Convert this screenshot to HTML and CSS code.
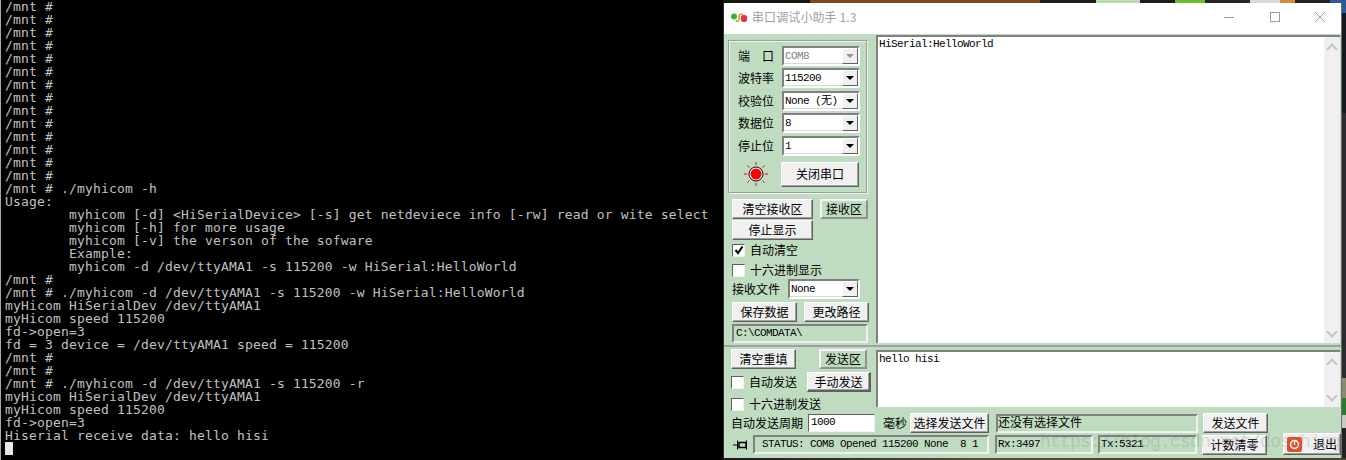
FILE: index.html
```html
<!DOCTYPE html>
<html lang="zh">
<head>
<meta charset="utf-8">
<title>串口调试小助手</title>
<link rel="stylesheet" href="styles.css">
</head>
<body>
<div class="desktop">
<pre class="terminal">/mnt #
/mnt #
/mnt #
/mnt #
/mnt #
/mnt #
/mnt #
/mnt #
/mnt #
/mnt #
/mnt #
/mnt #
/mnt #
/mnt #
/mnt # ./myhicom -h
Usage:
        myhicom [-d] &lt;HiSerialDevice&gt; [-s] get netdeviece info [-rw] read or wite select
        myhicom [-h] for more usage
        myhicom [-v] the verson of the sofware
        Example:
        myhicom -d /dev/ttyAMA1 -s 115200 -w HiSerial:HelloWorld
/mnt #
/mnt # ./myhicom -d /dev/ttyAMA1 -s 115200 -w HiSerial:HelloWorld
myHicom HiSerialDev /dev/ttyAMA1
myHicom speed 115200
fd-&gt;open=3
fd = 3 device = /dev/ttyAMA1 speed = 115200
/mnt #
/mnt #
/mnt # ./myhicom -d /dev/ttyAMA1 -s 115200 -r
myHicom HiSerialDev /dev/ttyAMA1
myHicom speed 115200
fd-&gt;open=3
Hiserial receive data: hello hisi
<span class="cursor"></span></pre>

<div class="strip-top"></div>
<div class="strip-right"></div>
<div class="strip-bottom"></div>

<section class="window">
  <header class="titlebar">
    <svg class="app-icon" width="17" height="11" viewBox="0 0 17 11">
      <path d="M5 8C5 10 8 10 8 7S8 2 10 2 12 4 12 6" fill="none" stroke="#c4ac20" stroke-width="1.600"/>
      <circle cx="3" cy="4.500" r="3" fill="#38b048"/>
      <rect x="10" y="3" width="6" height="7" rx="2.500" fill="#e8303a"/>
    </svg>
    <span class="title-text">串口调试小助手 1.3</span>
    <div class="caption">
      <svg width="12" height="12" viewBox="0 0 12 12"><path d="M1 6.500H11" stroke="#999" fill="none"/></svg>
      <svg width="12" height="12" viewBox="0 0 12 12"><rect x="1.500" y="1.500" width="9" height="9" stroke="#999" fill="none"/></svg>
      <svg width="12" height="12" viewBox="0 0 12 12"><path d="M1 1L11 11M11 1L1 11" stroke="#999" fill="none"/></svg>
    </div>
  </header>

  <div class="upper">
    <aside class="side">
      <div class="group">
        <div class="port-row"><span class="lbl spread"><span>端</span><span>口</span></span><span class="select disabled"><span class="val">COM8</span><i class="arrow"></i></span></div>
        <div class="port-row"><span class="lbl">波特率</span><span class="select"><span class="val">115200</span><i class="arrow"></i></span></div>
        <div class="port-row"><span class="lbl">校验位</span><span class="select"><span class="val">None (无)</span><i class="arrow"></i></span></div>
        <div class="port-row"><span class="lbl">数据位</span><span class="select"><span class="val">8</span><i class="arrow"></i></span></div>
        <div class="port-row"><span class="lbl">停止位</span><span class="select"><span class="val">1</span><i class="arrow"></i></span></div>
        <div class="open-row">
          <svg class="led" width="24" height="24" viewBox="0 0 24 24">
            <circle cx="12" cy="12" r="7" fill="#fff" stroke="#000"/>
            <circle cx="12" cy="12" r="5.500" fill="#f00"/>
            <path d="M12 0V3M12 21V24M0 12H3M21 12H24M3.500 3.500L5.500 5.500M20.500 3.500L18.500 5.500M3.500 20.500L5.500 18.500M20.500 20.500L18.500 18.500" stroke="#f00" fill="none"/>
          </svg>
          <span class="btn open-btn">关闭串口</span>
        </div>
      </div>
      <div class="recv-controls">
        <div class="row recv-row1"><span class="btn w81">清空接收区</span><span class="tag">接收区</span></div>
        <span class="btn w81">停止显示</span>
        <label class="check chk-first"><i class="box on"><svg width="10" height="10" viewBox="0 0 10 10"><path d="M1.500 5L4 8L8.500 1.500" fill="none" stroke="#000" stroke-width="2"/></svg></i>自动清空</label>
        <label class="check chk-second"><i class="box"></i>十六进制显示</label>
        <div class="row file-row"><span class="lbl">接收文件</span><span class="select small"><span class="val">None</span><i class="arrow"></i></span></div>
        <div class="row save-row"><span class="btn w65">保存数据</span><span class="btn w65">更改路径</span></div>
        <div class="path mono">C:\COMDATA\</div>
      </div>
    </aside>
    <div class="textbox recv">
      <div class="text mono">HiSerial:HelloWorld</div>
      <div class="scroll"><i class="up"></i><i class="down"></i></div>
    </div>
  </div>

  <div class="lower">
    <div class="send-area">
      <div class="send-side">
        <div class="row send-row1"><span class="btn w65">清空重填</span><span class="tag">发送区</span></div>
        <div class="row send-row2"><label class="check"><i class="box"></i>自动发送</label><span class="btn manual">手动发送</span></div>
        <label class="check chk-third"><i class="box"></i>十六进制发送</label>
      </div>
      <div class="textbox send">
        <div class="text mono">hello hisi</div>
        <div class="scroll"><i class="up"></i><i class="down"></i></div>
      </div>
    </div>
    <div class="row bottom-a">
      <span class="lbl period">自动发送周期</span>
      <span class="input">1000</span>
      <span class="lbl ms">毫秒</span>
      <span class="btn pick">选择发送文件</span>
      <span class="sunken nofile">还没有选择文件</span>
      <span class="btn w65 send-file">发送文件</span>
    </div>
    <div class="row bottom-b">
      <svg class="pin" width="15" height="12" viewBox="0 0 15 12"><path d="M0 6H4" stroke="#000" fill="none"/><path d="M4.500 1.500V10.500" stroke="#000" fill="none"/><path d="M6 3.500H13V8.500H6Z" stroke="#000" stroke-width="1.500" fill="#c0dcc0"/><path d="M13.500 1.500V10.500" stroke="#000" fill="none"/></svg>
      <span class="sunken status mono">STATUS: COM8 Opened 115200 None  8 1</span>
      <span class="sunken rx mono">Rx:3497</span>
      <span class="sunken tx mono">Tx:5321</span>
      <span class="btn w65 reset">计数清零</span>
      <span class="btn exit"><svg width="15" height="15" viewBox="0 0 15 15"><rect width="15" height="15" rx="2" fill="#e2502a"/><circle cx="7.500" cy="7.500" r="4" fill="none" stroke="#fff" stroke-width="1.500"/><path d="M7.500 4V8" stroke="#fff" stroke-width="1.500"/></svg>退出</span>
    </div>
  </div>
</section>
<div class="watermark">https://blog.csdn.net/dosthing</div>
</div>
</body>
</html>
```
FILE: styles.css
```css
* { box-sizing: border-box; }
html, body { margin: 0; padding: 0; background: #000; }
.desktop { position: relative; width: 1346px; height: 460px; overflow: hidden; background: #000; }

.terminal {
  margin: 0; width: 723px; height: 460px; overflow: hidden;
  padding: 0 0 0 4px; border-left: 1px solid #a8a8a8;
  background: #000; color: #c0c0c0;
  font: 13px/13px "DejaVu Sans Mono", monospace;
  letter-spacing: .17px;
}
.cursor { display: inline-block; width: 8px; height: 13px; background: #e8e8e8; vertical-align: top; }

.strip-top {
  position: absolute; left: 723px; top: 0; width: 623px; height: 3px;
  background: linear-gradient(90deg, #1b1510 0 87px, #7a4a22 87px 317px, #1e1c18 317px 373px, #b8dcb0 373px 417px, #1c1c1c 417px 452px, #6cbc2c 452px 482px, #2a2420 482px 527px, #d8d8d4 527px 557px, #d88a30 557px 572px, #222 572px 607px, #2c5a9a 607px);
}
.strip-right {
  position: absolute; left: 1342px; top: 3px; width: 4px; height: 457px;
  background: linear-gradient(180deg, #2c5a9a 0 10px, #151a22 10px 110px, #2a2c30 110px 375px, #8a8a70 375px 395px, #2a7a30 395px 412px, #c8c8c0 412px 425px, #222 425px);
}
.strip-bottom {
  position: absolute; left: 723px; top: 458px; width: 623px; height: 2px;
  background: linear-gradient(90deg, #1a1a1a, #5a4a38 40%, #4a4030);
}

.window {
  position: absolute; left: 723px; top: 3px; width: 619px; height: 455px;
  background: #c0dcc0; border-left: 1px solid #303030; border-right: 1px solid #707070;
  font: 12px/16px "Noto Sans CJK SC", sans-serif; color: #000;
  display: flex; flex-direction: column;
}
.titlebar { height: 31px; flex: none; background: #fff; display: flex; align-items: center; padding: 0 0 3px 7px; }
.app-icon { margin-right: 4px; }
.title-text { color: #a0a0a0; font-size: 12px; letter-spacing: .1px; }
.caption { margin-left: auto; display: flex; gap: 33.500px; padding-right: 15px; }

.upper { display: flex; height: 311px; flex: none; }
.side { width: 152px; flex: none; padding: 6px 0 0 4px; }
.group { width: 140px; height: 154px; border: 2px groove #f0f0f0; padding: 4px 0 0 8px; display: flex; flex-direction: column; gap: 3.500px; }
.port-row { display: flex; align-items: center; height: 19px; }
.port-row .lbl { width: 44px; }
.lbl { white-space: nowrap; }
.spread { display: flex; justify-content: space-between; padding-right: 8px; }

.select {
  display: flex; align-items: center; justify-content: space-between;
  width: 78px; height: 20px; background: #fff;
  border: 2px solid; border-color: #808080 #fff #fff #808080;
  padding-left: 1px;
  font: 11px/14px "Liberation Mono", "Noto Sans CJK SC", monospace;
  box-shadow: inset -1px -1px 0 #d8d8d8;
  white-space: pre;
}
.select.disabled { color: #808080; }
.val { letter-spacing: -.6px; }
.arrow {
  position: relative; display: block; flex: none; width: 16px; height: 16px; background: #f0f0f0;
  border: 1px solid; border-color: #fff #606060 #606060 #fff;
}
.arrow::after {
  content: ""; position: absolute; left: 3px; top: 5px;
  border: 4px solid transparent; border-top: 4px solid #000; border-bottom: 0;
}
.disabled .arrow::after { border-top-color: #909090; }

.btn {
  display: flex; align-items: center; justify-content: center; flex: none;
  height: 20px; background: #f0f0f0; white-space: nowrap;
  border: 1px solid; border-color: #fff #606060 #606060 #fff;
  box-shadow: inset -1px -1px 0 #a0a0a0;
}
.open-row { display: flex; align-items: center; margin-top: 3px; }
.led { margin-left: 6px; }
.open-btn { margin-left: 13px; width: 78px; height: 25px; }

.recv-controls { padding: 5px 0 0 4px; display: flex; flex-direction: column; align-items: flex-start; }
.row { display: flex; align-items: center; }
.w81 { width: 81px; }
.w65 { width: 65px; }
.recv-row1 { gap: 7px; margin-bottom: 1px; }
.tag {
  display: flex; align-items: center; justify-content: center;
  width: 48px; height: 20px; border: 2px solid; border-color: #f4f4f4 #909090 #909090 #f4f4f4;
}
.check { display: flex; align-items: center; height: 14px; white-space: nowrap; }
.box {
  display: flex; align-items: center; justify-content: center;
  width: 13px; height: 13px; background: #fff; margin-right: 5px;
  border: 1px solid; border-color: #606060 #f0f0f0 #f0f0f0 #606060;
}
.chk-first { margin-top: 3px; }
.chk-second { margin-top: 6px; }
.file-row { margin-top: 2px; height: 20px; }
.small { width: 72px; margin-left: 8px; }
.save-row { gap: 7px; margin-top: 3px; }
.path {
  width: 136px; height: 19px; margin-top: 2px; padding-left: 2px;
  border: 2px solid; border-color: #808080 #f0f0f0 #f0f0f0 #808080;
  line-height: 15px;
}
.mono { font: 11px/14px "Liberation Mono", monospace; letter-spacing: -.6px; white-space: pre; }

.textbox {
  position: relative; background: #fff; width: 464px;
  border-top: 2px solid #808080; border-left: 2px solid #808080;
  display: flex; justify-content: space-between;
}
.recv { height: 308px; margin-top: 1px; }
.send { height: 57px; }
.text { padding: 0 0 0 1px; }
.scroll { position: relative; width: 16px; background: #f0f0f0; }
.scroll i { position: absolute; left: 4px; width: 8px; height: 8px; border: solid #c4c4c4; border-width: 2px 0 0 2px; }
.scroll .up { top: 8px; transform: rotate(45deg); }
.scroll .down { bottom: 7px; transform: rotate(225deg); }

.lower { flex: 1; border-top: 2px solid #a0a0a0; padding-top: 3px; display: flex; flex-direction: column; }
.send-area { display: flex; height: 57px; }
.send-side { width: 152px; flex: none; padding-left: 7px; margin-top: -1px; }
.send-row1 { gap: 23px; }
.send-row2 { margin-top: 3px; justify-content: space-between; padding-right: 5px; }
.manual { width: 64px; border-width: 1px 2px 2px 1px; }
.chk-third { margin-top: 5px; }

.bottom-a { margin-top: 6px; padding-left: 7px; }
.period { width: 77px; }
.input {
  width: 67px; height: 18px; background: #fff; padding-left: 2px;
  border: 1px solid; border-color: #606060 #f0f0f0 #f0f0f0 #606060;
  font: 11px/15px "Liberation Mono", monospace; letter-spacing: -.6px;
}
.ms { margin-left: 8px; }
.pick { width: 79px; margin-left: 3px; }
.sunken {
  display: block; height: 19px; padding-left: 1px;
  border: 2px solid; border-color: #808080 #f0f0f0 #f0f0f0 #808080;
  line-height: 12px; white-space: pre;
}
.sunken.mono { line-height: 15px; }
.nofile { width: 202px; margin-left: 7px; padding-left: 0; }
.send-file { margin-left: 5px; }
.bottom-b { margin-top: 2px; padding-left: 9px; align-items: flex-start; }
.pin { margin: 4px 5px 0 0; flex: none; }
.status { width: 236px; padding-left: 7px; }
.rx { width: 98px; margin-left: 6px; }
.tx { width: 99px; margin-left: 5px; }
.reset { margin-left: 5px; }
.exit { width: 58px; height: 22px; margin: -2px 0 0 16px; gap: 11px; }

.watermark {
  position: absolute; left: 1040px; top: 433px;
  font: 18px/18px "Liberation Mono", monospace; letter-spacing: -.8px;
  color: rgba(110, 110, 110, .22); white-space: nowrap;
}
```
